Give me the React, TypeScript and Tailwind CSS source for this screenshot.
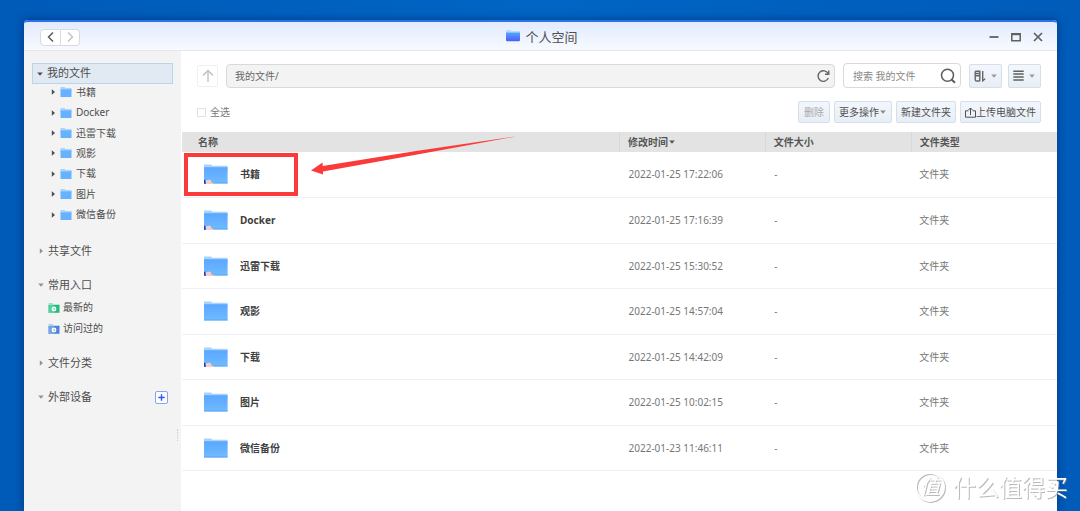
import type { ReactNode } from "react";

const files = [
  { name: "书籍", date: "2022-01-25 17:22:06", shared: true },
  { name: "Docker", date: "2022-01-25 17:16:39", shared: true },
  { name: "迅雷下载", date: "2022-01-25 15:30:52", shared: true },
  { name: "观影", date: "2022-01-25 14:57:04", shared: false },
  { name: "下载", date: "2022-01-25 14:42:09", shared: true },
  { name: "图片", date: "2022-01-25 10:02:15", shared: false },
  { name: "微信备份", date: "2022-01-23 11:46:11", shared: false },
];

function SmallFolder() {
  return (
    <svg className="w-3 h-3" viewBox="0 0 12 12">
      <path d="M.5 1h4.200l.8 1h6v3H.5z" fill="#a9d4fd" />
      <path d="M.5 3.400h11V11H.5z" fill="#66b2ff" />
    </svg>
  );
}

function LargeFolder({ shared }: { shared: boolean }) {
  return (
    <svg className="w-6 h-5 shrink-0" viewBox="0 0 24 20">
      <defs>
        <linearGradient id="folder" x1="0" y1="0" x2="0" y2="1">
          <stop offset="0" stopColor="#5aa7ff" />
          <stop offset="1" stopColor="#71bbff" />
        </linearGradient>
      </defs>
      <path d="M0 .5h7l1.500 1.200h15V6H0z" fill="#a8d4fc" />
      <path d="M0 3.200h23.600v16.300H0z" fill="url(#folder)" />
      <path d="M0 18.400h23.600v1H0z" fill="#5ba8f5" />
      {shared && (
        <g>
          <path d="M0 15.800h1.600l.4 4H0z" fill="#1c3fa8" />
          <path d="M1.600 16.200h.8l.4 3.600H2z" fill="#fff" />
          <path d="M2.200 16.600c1.400-.9 3-1 4.400-.5.8.4.8 1.300.2 1.900l2.800 1c.4.4 0 .8-.6.9H2.600z" fill="#f6cdc3" />
        </g>
      )}
    </svg>
  );
}

function EntryFolder({ from, to }: { from: string; to: string }) {
  return (
    <svg className="w-3 h-3" viewBox="0 0 12 12">
      <path d="M.5 1h4l.8 1.200h6.200V5H.5z" fill={from} opacity=".65" />
      <path d="M.5 3h11v7.800H.5z" fill={to} />
      <path d="M.5 3h5v7.800h-5z" fill={from} opacity=".6" />
      <circle cx="6" cy="7" r="2.400" fill="#fff" />
      <path d="M6 5.800v1.400l1 .5" fill="none" stroke={to} strokeWidth=".7" />
    </svg>
  );
}

function Arrow({ open }: { open?: boolean }) {
  return (
    <svg className="w-2 h-2 shrink-0" viewBox="0 0 8 8" fill="currentColor">
      <path d={open ? "M1.2 2.500h5.600L4 5.700z" : "M2.800 1.200v5.600L6 4z"} />
    </svg>
  );
}

function ToolButton({ children, className = "" }: { children: ReactNode; className?: string }) {
  return (
    <button
      className={`flex items-center justify-center border border-[#d3dfe9] rounded-xs bg-linear-to-b from-[#f3f7fd] to-[#e8eef5] text-[#505050] whitespace-nowrap ${className}`}
    >
      {children}
    </button>
  );
}

function TitleBar() {
  return (
    <header className="h-[31px] shrink-0 grid grid-cols-3 items-center px-4 pt-0.5 border-t-2 border-t-[#2c73ea] border-b border-b-[#e4e7ed] rounded-t-sm bg-linear-to-b from-[#e2ebfd] to-[#f7faff]">
      <div className="flex">
        <button aria-label="后退" className="w-[21px] h-[17px] flex items-center justify-center bg-white border border-[#d8dade] rounded-l-sm text-[#555]">
          <svg className="w-3 h-3" viewBox="0 0 12 12" fill="none" stroke="currentColor" strokeWidth="1.400">
            <path d="M8 1.500 3.500 6 8 10.500" />
          </svg>
        </button>
        <button aria-label="前进" className="w-[19px] h-[17px] flex items-center justify-center bg-white border border-l-0 border-[#d8dade] rounded-r-sm text-[#c2c2c2]">
          <svg className="w-3 h-3" viewBox="0 0 12 12" fill="none" stroke="currentColor" strokeWidth="1.400">
            <path d="M4 1.500 8.500 6 4 10.500" />
          </svg>
        </button>
      </div>
      <h1 className="flex items-center justify-center gap-1 pl-0.5 text-[13px] leading-4 text-[#4f4f4f]">
        <svg className="w-4 h-4" viewBox="0 0 16 16">
          <defs>
            <linearGradient id="app" x1="0" y1="0" x2="0" y2="1">
              <stop offset="0" stopColor="#58a5fb" />
              <stop offset="1" stopColor="#485cfb" />
            </linearGradient>
          </defs>
          <path d="M1 2q0-1 1-1h3.500l1 1h7.500q1 0 1 1v4H1z" fill="#b2dcfa" />
          <path d="M1 3.500h14V11q0 1.300-1.300 1.300H2.300Q1 12.300 1 11z" fill="url(#app)" />
        </svg>
        个人空间
      </h1>
      <div className="flex justify-end gap-3 -mr-0.5 text-[#606060]">
        <button aria-label="最小化">
          <svg className="w-[10px] h-[10px]" viewBox="0 0 10 10" stroke="currentColor" strokeWidth="1.800">
            <path d="M.5 5h9" />
          </svg>
        </button>
        <button aria-label="最大化">
          <svg className="w-[10px] h-[10px]" viewBox="0 0 10 10" fill="none" stroke="currentColor" strokeWidth="1.500">
            <path d="M.8 1.800h8.400v6.900H.8z" />
            <path d="M.8 2.300h8.400" strokeWidth="1.800" />
          </svg>
        </button>
        <button aria-label="关闭">
          <svg className="w-[10px] h-[10px]" viewBox="0 0 10 10" stroke="currentColor" strokeWidth="1.700">
            <path d="m1 1 8 8M9 1 1 9" />
          </svg>
        </button>
      </div>
    </header>
  );
}

function SidebarGroup({ label, open, children }: { label: string; open?: boolean; children?: ReactNode }) {
  return (
    <div className="h-5 flex items-center justify-between pl-1 pr-[5px] text-[11px]">
      <button className="flex items-center">
        <span className="flex pl-px pr-[3px] text-[#929292]">
          <Arrow open={open} />
        </span>
        {label}
      </button>
      {children}
    </div>
  );
}

function Sidebar() {
  return (
    <aside className="w-[157px] shrink-0 flex flex-col relative bg-[#f3f3f3] pt-3 px-2 text-[10px] text-[#4d4d4d]">
      <button className="h-[21px] flex items-center gap-[3px] px-[3px] border border-[#b8d5ee] bg-[#e1eaf3] text-[11px]">
        <Arrow open />
        我的文件
      </button>
      <ul className="h-[143px] flex flex-col pl-[17px] -mt-0.5">
        {files.map(({ name }) => (
          <li key={name} className="flex-1 flex">
            <button className="flex items-center gap-[3px]">
              <Arrow />
              <SmallFolder />
              <span className="pl-px">{name}</span>
            </button>
          </li>
        ))}
      </ul>
      <div className="flex flex-col gap-[14px] pt-4">
        <SidebarGroup label="共享文件" />
        <div>
          <SidebarGroup label="常用入口" open />
          <ul className="flex flex-col pt-0.5 pl-4">
            <li className="h-[21px] flex">
              <button className="flex items-center gap-[3px]">
                <EntryFolder from="#6edcae" to="#24bd80" />
                最新的
              </button>
            </li>
            <li className="h-[21px] flex">
              <button className="flex items-center gap-[3px]">
                <EntryFolder from="#8db9ee" to="#5084d6" />
                访问过的
              </button>
            </li>
          </ul>
        </div>
        <SidebarGroup label="文件分类" />
        <SidebarGroup label="外部设备" open>
          <button aria-label="添加设备" className="w-[13px] h-[13px] flex items-center justify-center border border-[#8ba2fb] rounded-xs bg-white">
            <svg className="w-[7px] h-[7px]" viewBox="0 0 7 7" stroke="#3156f4" strokeWidth="1.400">
              <path d="M3.500.3v6.400M.3 3.500h6.400" />
            </svg>
          </button>
        </SidebarGroup>
      </div>
      <div className="absolute right-[3px] top-[378px] w-px h-3 border-l border-dotted border-[#cfcfcf]" />
    </aside>
  );
}

function Toolbar() {
  return (
    <div className="px-4 pt-3 text-[10px] leading-4">
      <div className="flex items-center gap-2">
        <button aria-label="上一级" className="w-[21px] h-[22px] flex items-center justify-center border border-[#f0f0f0] rounded-xs text-[#bfbfbf]">
          <svg className="w-[14px] h-[14px]" viewBox="0 0 14 14" fill="none" stroke="currentColor" strokeWidth="1.300">
            <path d="M7 13V1.500M2 6.500l5-5 5 5" />
          </svg>
        </button>
        <div className="flex-1 h-6 flex items-center justify-between px-2 border border-[#d9d9d9] rounded-sm bg-[#f3f3f3] text-[#666]">
          我的文件/
          <button aria-label="刷新" className="-mr-1">
            <svg className="w-[14px] h-[14px]" viewBox="0 0 14 14" fill="none" stroke="#666" strokeWidth="1.400">
              <path d="M12.300 9a5.300 5.300 0 1 1-.2-4.400" />
              <path d="M12.800 1.500v3.800H9" />
            </svg>
          </button>
        </div>
        <label className="w-[118px] h-[25px] flex items-center pl-[9px] pr-1 border border-[#d9d9d9] rounded-sm">
          <input aria-label="搜索" placeholder="搜索 我的文件" className="w-full min-w-0 outline-none placeholder:text-[#888]" />
          <svg className="w-4 h-4 shrink-0" viewBox="0 0 16 16" fill="none" stroke="#5c5c5c" strokeWidth="1.500">
            <circle cx="7.500" cy="7.300" r="6" />
            <path d="m11.500 11.500 3.500 3.300" strokeWidth="2" />
          </svg>
        </label>
        <div className="flex gap-1.5">
          <ToolButton className="w-[33px] h-6 gap-1">
            <svg aria-label="排序" className="w-3 h-3" viewBox="0 0 12 12" fill="none" stroke="#666" strokeWidth="1.400">
              <path d="M1.200 1.200h4.600v9q0 .8-.8.8H2.800q-1.600 0-1.600-1.600V1.200M1.200 5.800h4.600M1.200 3.500h4.600M8.700 1v9.800l2.500-2" />
            </svg>
            <span className="text-[#999]"><Arrow open /></span>
          </ToolButton>
          <ToolButton className="w-[33px] h-6 gap-1">
            <svg aria-label="视图" className="w-[11px] h-[11px]" viewBox="0 0 11 11" stroke="#606060" strokeWidth="1.500">
              <path d="M.3 1.200h10.400M.3 4.100h10.400M.3 7h10.400M.3 9.900h10.400" />
            </svg>
            <span className="text-[#999]"><Arrow open /></span>
          </ToolButton>
        </div>
      </div>
      <div className="flex items-center justify-between pt-[13px]">
        <label className="flex items-center gap-1 text-[#777]">
          <input type="checkbox" className="appearance-none w-[9px] h-[9px] border border-[#e2e2e6] bg-white" />
          全选
        </label>
        <div className="flex gap-1">
          <ToolButton className="h-[22px] px-[5px] text-[#aaa]!">删除</ToolButton>
          <ToolButton className="h-[22px] px-1">
            更多操作
            <span className="text-[#888]"><Arrow open /></span>
          </ToolButton>
          <ToolButton className="h-[22px] px-1">新建文件夹</ToolButton>
          <ToolButton className="h-[22px] px-1">
            <svg className="w-[11px] h-[11px]" viewBox="0 0 11 11" fill="none" stroke="currentColor">
              <path d="M3.500 3.800h-3v6.400h10V3.800h-3M5.500 8V1M3.500 3l2-2 2 2" />
            </svg>
            上传电脑文件
          </ToolButton>
        </div>
      </div>
    </div>
  );
}

function FileTable() {
  return (
    <table className="w-full table-fixed mt-[9px] text-[10px] leading-4 text-left text-[#777]">
      <thead>
        <tr className="h-5 bg-[#e3e3e3] text-[#555]">
          <th className="w-1/2 py-0 pl-4 border-r border-[#d8d8d8]">名称</th>
          <th className="w-1/6 py-0 pl-2 border-r border-[#d8d8d8]">
            <button className="flex items-center font-bold">
              修改时间
              <Arrow open />
            </button>
          </th>
          <th className="w-1/6 py-0 pl-2 border-r border-[#d8d8d8]">文件大小</th>
          <th className="w-1/6 py-0 pl-2">文件类型</th>
        </tr>
      </thead>
      <tbody>
        {files.map(({ name, date, shared }, index) => (
          <tr key={name} className="odd:h-[45px] even:h-[46px] border-b border-[#eff0f5]">
            <td className="relative py-0 pl-[22px]">
              <div className="flex items-center gap-3 font-bold text-[#404040]">
                <LargeFolder shared={shared} />
                {name}
              </div>
              {index === 0 && <Callout />}
            </td>
            <td className="py-0 pl-[9px]">{date}</td>
            <td className="py-0 pl-[9px]">-</td>
            <td className="py-0 pl-2">文件夹</td>
          </tr>
        ))}
      </tbody>
    </table>
  );
}

// Red box and arrow drawn over the first row
function Callout() {
  return (
    <>
      <div className="absolute left-0.5 top-px w-[114px] h-[43px] border-4 border-[#fb3a3a]" />
      <svg className="absolute left-32 -top-4 w-[208px] h-10" viewBox="0 0 208 40" fill="#fb3a3a">
        <path d="m1 34.500 11.500-8 .3 3.500Q109 14 206 .5 109 18.500 13 35.500v3z" />
      </svg>
    </>
  );
}

function Watermark() {
  return (
    <div className="absolute right-3 bottom-2 flex items-center gap-2 text-white text-[23px] leading-8 drop-shadow-[1px_1px_0px_rgba(130,130,130,0.55)]">
      <span className="w-[30px] h-[30px] flex items-center justify-center border-2 border-white rounded-full text-[20px] italic">
        值
      </span>
      什么值得买
    </div>
  );
}

export default function App() {
  return (
    <div className="relative min-h-screen flex flex-col overflow-hidden pt-5 pl-6 pr-[23px] bg-linear-to-r from-[#005ab7] via-[#0065c4] to-[#005bb9] font-['Noto_Sans','Noto_Sans_CJK_SC',sans-serif]">
      <div className="flex-1 flex flex-col rounded-t-sm shadow-[0_0_8px_rgba(0,20,80,0.5)] bg-white">
        <TitleBar />
        <div className="flex-1 flex">
          <Sidebar />
          <main className="flex-1 min-w-0">
            <Toolbar />
            <div className="pl-px">
              <FileTable />
            </div>
          </main>
        </div>
      </div>
      <Watermark />
    </div>
  );
}
